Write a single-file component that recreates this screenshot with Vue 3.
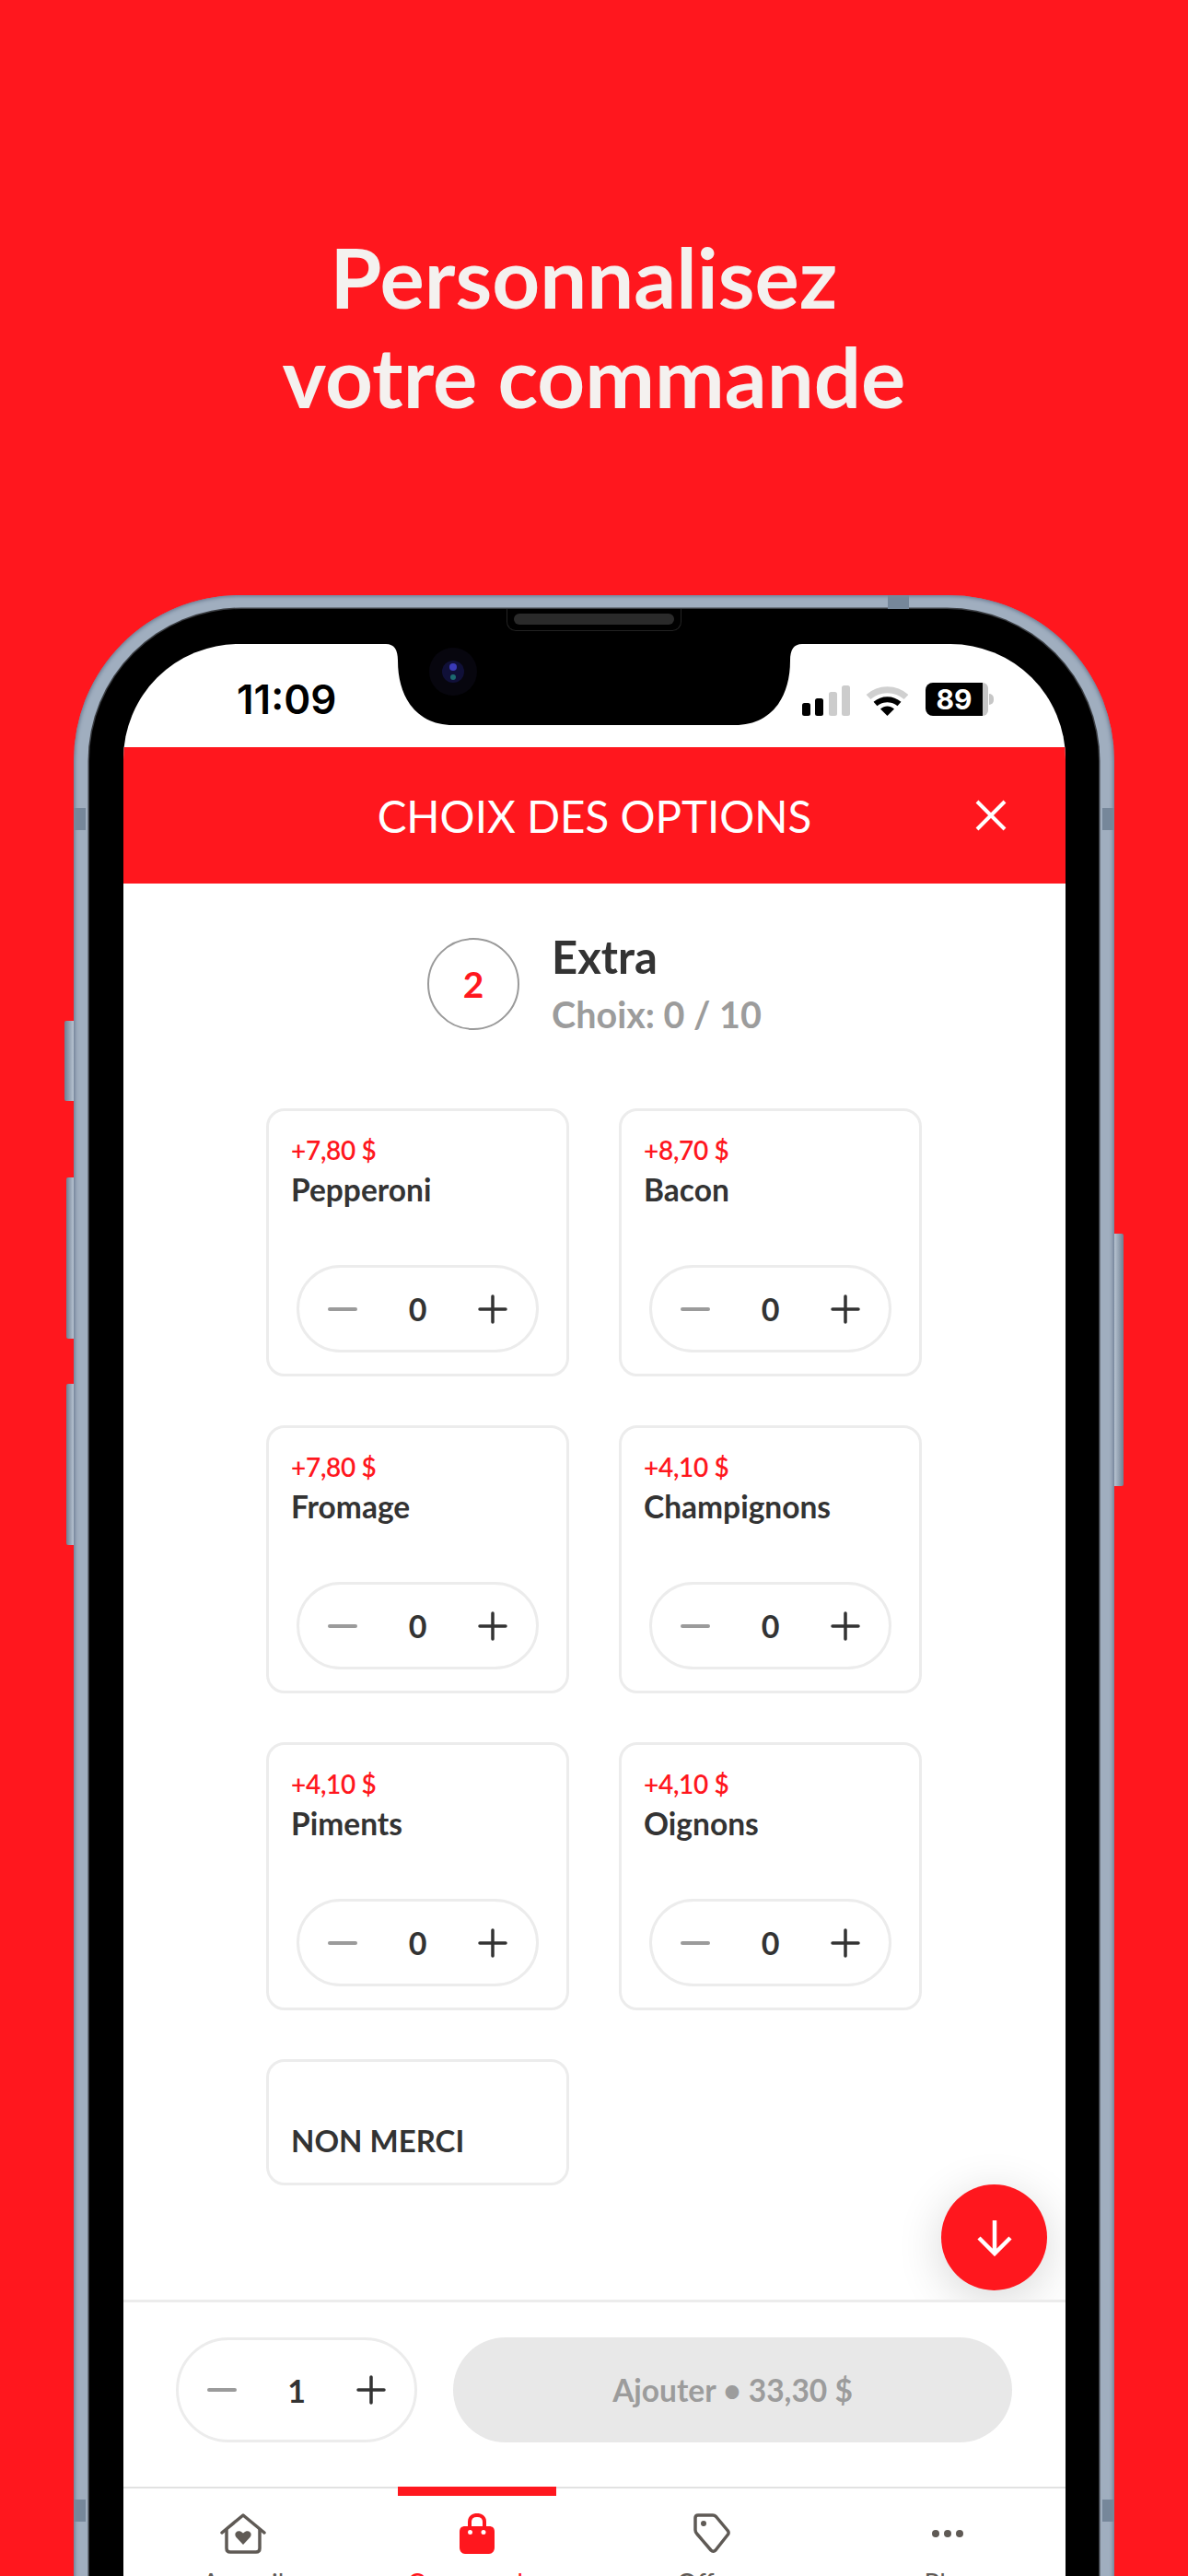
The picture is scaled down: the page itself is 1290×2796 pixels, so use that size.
<template>
  <div class="page">
    <section class="hero">
      <h1>Personnalisez&nbsp;<br />votre commande</h1>
    </section>

    <div class="phone">
      <i class="side mute"></i>
      <i class="side vol-up"></i>
      <i class="side vol-down"></i>
      <i class="side power"></i>
      <i class="band band-left"></i>
      <i class="band band-right"></i>
      <i class="band band-top"></i>

      <div class="bezel">
        <div class="speaker"><span></span></div>
        <div class="screen">
          <svg class="notch" width="452" height="88" viewBox="0 0 452 88">
            <path d="M0 0C9 0 13 6 13 18C13 60 35 88 73 88L379 88C417 88 439 60 439 18C439 6 443 0 452 0Z" fill="#000" />
            <circle cx="73" cy="30" r="26" fill="#07060e" />
            <circle cx="73" cy="30" r="12" fill="#101038" />
            <ellipse cx="73" cy="25" rx="4" ry="4" fill="#3a3ab8" />
            <ellipse cx="73" cy="36" rx="3" ry="3" fill="#1c6a70" />
          </svg>

          <div class="status">
            <span class="time">11:09</span>
            <div class="status-icons">
              <svg width="52" height="33" viewBox="0 0 52 33">
                <rect x="0" y="19" width="9" height="14" rx="2.5" fill="#000" />
                <rect x="14" y="14" width="9" height="19" rx="2.5" fill="#000" />
                <rect x="29" y="7" width="9" height="26" rx="2.5" fill="#ccc" />
                <rect x="43" y="0" width="9" height="33" rx="2.5" fill="#ccc" />
              </svg>
              <svg class="wifi" width="47" height="33" viewBox="0 0 47 33">
                <path d="M3 12.500C14.500 2 32.500 2 44 12.500" fill="none" stroke="#d0d0d0" stroke-width="7" />
                <path d="M10.500 20C18 13.500 29 13.500 36.500 20" fill="none" stroke="#000" stroke-width="6" />
                <path d="M16 25.500C20.500 21.500 26.500 21.500 31 25.500L23.500 33Z" fill="#000" />
              </svg>
              <div class="battery">
                <span class="battery-level">89</span>
                <span class="battery-rest"></span>
                <span class="battery-nub"></span>
              </div>
            </div>
          </div>

          <header class="topbar">
            <h2>CHOIX DES OPTIONS</h2>
            <svg class="close" width="36" height="36" viewBox="0 0 36 36">
              <path d="M3 3L33 33M33 3L3 33" stroke="#fff" stroke-width="4" />
            </svg>
          </header>

          <main class="content">
            <div class="step">
              <div class="step-num">2</div>
              <div class="step-text">
                <h3>Extra</h3>
                <p>Choix: 0 / 10</p>
              </div>
            </div>

            <div class="options">
              <div v-for="opt in options" :key="opt.name" class="card">
                <div class="price">{{ opt.price }}</div>
                <div class="name">{{ opt.name }}</div>
                <div class="stepper">
                  <svg width="32" height="4" viewBox="0 0 32 4"><path d="M2 2H30" stroke="#9b9b9b" stroke-width="4" stroke-linecap="round" /></svg>
                  <span>0</span>
                  <svg width="32" height="32" viewBox="0 0 32 32"><path d="M2 16H30M16 2V30" stroke="#333" stroke-width="3.500" stroke-linecap="round" /></svg>
                </div>
              </div>
              <div class="card card-none">NON MERCI</div>
            </div>

            <button class="fab">
              <svg width="38" height="40" viewBox="0 0 38 40">
                <path d="M19 1V37M2 20L19 37L36 20" fill="none" stroke="#fff" stroke-width="4.500" />
              </svg>
            </button>
          </main>

          <div class="actions">
            <div class="stepper">
              <svg width="32" height="4" viewBox="0 0 32 4"><path d="M2 2H30" stroke="#9b9b9b" stroke-width="4" stroke-linecap="round" /></svg>
              <span>1</span>
              <svg width="32" height="32" viewBox="0 0 32 32"><path d="M2 16H30M16 2V30" stroke="#333" stroke-width="3.500" stroke-linecap="round" /></svg>
            </div>
            <button class="add">Ajouter • 33,30 $</button>
          </div>

          <nav class="tabs">
            <div class="tab tab-first">
              <svg width="50" height="44" viewBox="0 0 50 44">
                <path d="M2 21L25 2L48 21" fill="none" stroke="#5f5a55" stroke-width="3.500" stroke-linecap="round" stroke-linejoin="round" />
                <path d="M7 17V38C7 40.500 8.500 42 11 42H39C41.500 42 43 40.500 43 38V17" fill="none" stroke="#5f5a55" stroke-width="3.500" />
                <path d="M25 34L17.500 26C14 22 19 16 25 21.500C31 16 36 22 32.500 26Z" fill="#5f5a55" />
              </svg>
              <span>Accueil</span>
            </div>
            <div class="tab active">
              <svg width="38" height="44" viewBox="0 0 38 44">
                <path d="M11 16V9C11 -0.500 27 -0.500 27 9V16" fill="none" stroke="#ff171e" stroke-width="4" />
                <path fill-rule="evenodd" d="M6 14H32C36 14 38 16 38 20V37C38 41 35.500 44 32 44H6C2.500 44 0 41 0 37V20C0 16 2 14 6 14ZM11.500 18A2.500 2.500 0 1 0 11.500 23A2.500 2.500 0 1 0 11.500 18ZM26 18A2.500 2.500 0 1 0 26 23A2.500 2.500 0 1 0 26 18Z" fill="#ff171e" />
              </svg>
              <span>Commander</span>
            </div>
            <div class="tab">
              <svg width="40" height="44" viewBox="0 0 40 44">
                <path d="M2 5C2 3 3 2 5 2H21C22.500 2 23.500 2.500 24.500 3.500L37 18.500C38.500 20 38.500 22 37 23.500L24 40C22.500 41.500 20.500 41.500 19 40L4 22.500C2.500 21 2 20 2 18Z" fill="none" stroke="#5f5a55" stroke-width="3.500" stroke-linejoin="round" />
                <circle cx="11" cy="11" r="3" fill="#5f5a55" />
              </svg>
              <span>Offres</span>
            </div>
            <div class="tab">
              <svg class="dots" width="36" height="44" viewBox="0 0 36 44">
                <circle cx="5" cy="22" r="4" fill="#5f5a55" />
                <circle cx="18" cy="22" r="4" fill="#5f5a55" />
                <circle cx="31" cy="22" r="4" fill="#5f5a55" />
              </svg>
              <span>Plus</span>
            </div>
          </nav>
        </div>
      </div>
    </div>
  </div>
</template>

<script setup>
const options = [
  { name: 'Pepperoni', price: '+7,80 $' },
  { name: 'Bacon', price: '+8,70 $' },
  { name: 'Fromage', price: '+7,80 $' },
  { name: 'Champignons', price: '+4,10 $' },
  { name: 'Piments', price: '+4,10 $' },
  { name: 'Oignons', price: '+4,10 $' }
];
</script>

<style>
html,
body {
  margin: 0;
  background: #ff171e;
}
</style>

<style scoped>
.page {
  width: 1290px;
  height: 2796px;
  overflow: hidden;
  background: #ff171e;
  font-family: Lato, "Liberation Sans", sans-serif;
  color: #333;
}
.hero {
  height: 646px;
  box-sizing: border-box;
  padding-top: 246px;
  text-align: center;
}
.hero h1 {
  margin: 0;
  font-size: 90.500px;
  line-height: 108px;
  font-weight: 700;
  color: #f4f1ef;
}
.phone {
  position: relative;
  width: 1130px;
  box-sizing: border-box;
  margin: 0 auto;
  padding: 15px 17px 0;
  border-radius: 180px 180px 0 0;
  background: #a0aebf;
  box-shadow: inset 0 0 4px 1px #62728a;
}
.side {
  position: absolute;
  left: -8px;
  width: 8px;
  background: linear-gradient(90deg, #6f7f92, #b7c3d1);
  border-radius: 2px 0 0 2px;
}
.mute {
  top: 462px;
  height: 87px;
  left: -10px;
  width: 10px;
}
.vol-up {
  top: 632px;
  height: 175px;
}
.vol-down {
  top: 856px;
  height: 175px;
}
.power {
  top: 693px;
  height: 274px;
  left: auto;
  right: -10px;
  width: 10px;
  border-radius: 0 2px 2px 0;
  background: linear-gradient(90deg, #b7c3d1, #6f7f92);
}
.band {
  position: absolute;
  background: #76879a;
  z-index: 1;
}
.band-left,
.band-right {
  top: 231px;
  width: 13px;
  height: 24px;
  box-shadow: 0 1836px 0 #76879a;
}
.band-left {
  left: 0;
}
.band-right {
  right: 0;
}
.band-top {
  top: 0;
  left: 884px;
  width: 23px;
  height: 15px;
}
.bezel {
  position: relative;
  padding: 38px 36px 0 37px;
  border-radius: 165px 165px 0 0;
  background: #000;
  box-shadow: 0 0 0 1.500px #3a3d42;
}
.speaker {
  position: absolute;
  top: 0;
  left: 453px;
  width: 190px;
  height: 24px;
  box-sizing: border-box;
  padding: 5px 7px;
  border: 1px solid #222;
  border-top: 0;
  border-radius: 0 0 10px 10px;
}
.speaker span {
  display: block;
  height: 12px;
  border-radius: 6px;
  background: #2a2a2a;
}
.screen {
  position: relative;
  overflow: hidden;
  border-radius: 125px 125px 0 0;
  background: #fff;
}
.notch {
  position: absolute;
  top: 0;
  left: 285px;
}
.status {
  height: 112px;
  position: relative;
}
.time {
  position: absolute;
  left: 123px;
  top: 36px;
  font-family: Inter, "Liberation Sans", sans-serif;
  font-size: 44px;
  font-weight: 600;
  line-height: 48px;
  color: #000;
}
.status-icons {
  position: absolute;
  left: 737px;
  top: 42px;
  display: flex;
  align-items: flex-end;
  gap: 17px;
}
.battery {
  display: flex;
  align-items: center;
  height: 36px;
  margin-left: 1px;
}
.battery-level {
  width: 62px;
  height: 36px;
  border-radius: 8px 0 0 8px;
  background: #000;
  color: #fff;
  font-family: Inter, "Liberation Sans", sans-serif;
  font-size: 30px;
  font-weight: 700;
  line-height: 36px;
  text-align: center;
}
.battery-rest {
  width: 6px;
  height: 36px;
  border-radius: 0 8px 8px 0;
  background: #c6c6c6;
}
.battery-nub {
  width: 5px;
  height: 12px;
  margin-left: 1px;
  border-radius: 0 6px 6px 0;
  background: #c6c6c6;
}
.topbar {
  position: relative;
  height: 148px;
  display: flex;
  align-items: center;
  justify-content: center;
  background: #ff171e;
}
.topbar h2 {
  margin: 0;
  font-size: 47.500px;
  font-weight: 400;
  color: #fff;
}
.close {
  position: absolute;
  right: 63px;
  top: 56px;
}
.content {
  position: relative;
  height: 1537px;
  box-sizing: border-box;
  padding-top: 59px;
}
.step {
  height: 100px;
  display: flex;
  align-items: flex-start;
  justify-content: center;
  gap: 35px;
  margin-bottom: 85px;
}
.step-num {
  width: 100px;
  height: 100px;
  box-sizing: border-box;
  border: 2px solid #9a9a9a;
  border-radius: 50%;
  display: flex;
  align-items: center;
  justify-content: center;
  font-size: 39px;
  font-weight: 700;
  color: #ff171e;
}
.step-text {
  margin-top: -5px;
}
.step h3 {
  margin: 0;
  font-size: 49px;
  line-height: 50px;
  font-weight: 700;
  color: #333;
}
.step p {
  margin: 14px 0 0;
  font-size: 39.500px;
  line-height: 48px;
  font-weight: 700;
  color: #9c9c9c;
}
.options {
  display: grid;
  grid-template-columns: 329px 329px;
  justify-content: start;
  padding-left: 155px;
  column-gap: 54px;
  row-gap: 53px;
}
.card {
  height: 291px;
  box-sizing: border-box;
  padding: 24px 33px 23px 24px;
  border: 3px solid #ececec;
  border-radius: 20px;
  display: flex;
  flex-direction: column;
}
.price {
  font-size: 28px;
  line-height: 36px;
  font-weight: 600;
  letter-spacing: -0.3px;
  color: #ff171e;
}
.name {
  margin-top: 4px;
  font-size: 33.500px;
  line-height: 42px;
  font-weight: 700;
  color: #333;
}
.card .stepper {
  margin: auto 0 0 6px;
  width: 263px;
  height: 95px;
}
.stepper {
  box-sizing: border-box;
  flex: none;
  width: 262px;
  height: 114px;
  padding: 0 31px;
  border: 3px solid #ececec;
  border-radius: 60px;
  display: flex;
  align-items: center;
  justify-content: space-between;
  font-size: 34px;
  font-weight: 700;
  color: #333;
}
.card-none {
  height: 137px;
  justify-content: flex-end;
  padding-bottom: 25px;
  font-size: 33px;
  line-height: 42px;
  font-weight: 700;
}
.fab {
  position: absolute;
  right: 20px;
  bottom: 10px;
  width: 115px;
  height: 115px;
  padding: 0;
  border: 0;
  border-radius: 50%;
  background: #ff171e;
  display: flex;
  align-items: center;
  justify-content: center;
  box-shadow: 0 10px 50px rgba(0, 0, 0, 0.16);
}
.actions {
  display: flex;
  gap: 39px;
  padding: 38px 58px 48px 57px;
  border-top: 3px solid #ececec;
  position: relative;
  background: #fff;
}
.add {
  flex: 1;
  height: 114px;
  border: 0;
  border-radius: 60px;
  background: #e8e8e8;
  font-family: inherit;
  font-size: 33.500px;
  font-weight: 700;
  color: #9c9c9c;
}
.tabs {
  display: grid;
  grid-template-columns: repeat(4, 1fr);
  border-top: 2px solid #e2e2e2;
  height: 160px;
}
.tab {
  position: relative;
  display: flex;
  flex-direction: column;
  align-items: center;
  padding-top: 27px;
  font-size: 28px;
  color: #5f5a55;
}
.tab-first {
  padding-left: 4px;
}
.tab span {
  margin-top: 14px;
}
.tab.active {
  color: #ff171e;
}
.tab.active::before {
  content: "";
  position: absolute;
  top: -2px;
  left: 42px;
  width: 172px;
  height: 10px;
  background: #ff171e;
}
</style>
